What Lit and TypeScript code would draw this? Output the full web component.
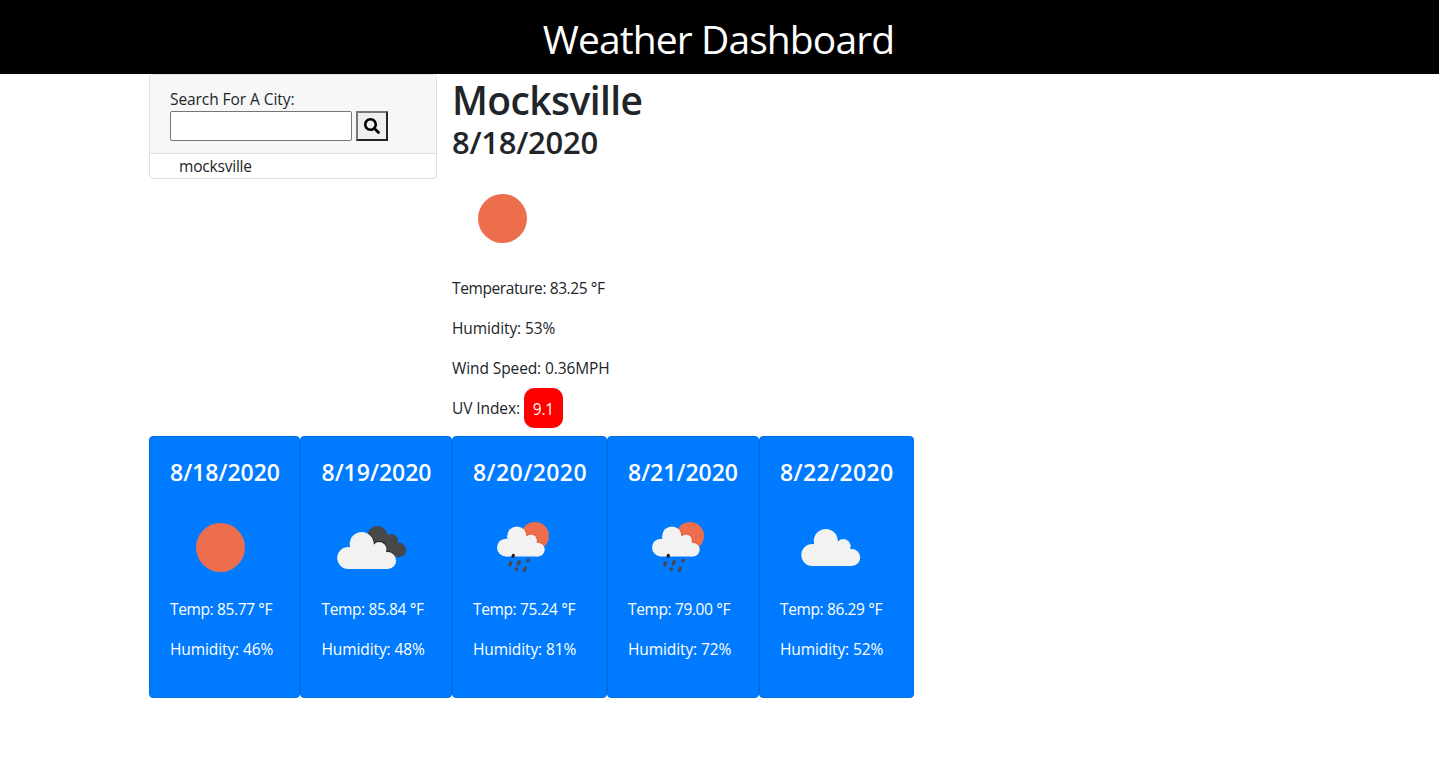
import { LitElement, html, css, svg } from "lit";
import { customElement } from "lit/decorators.js";

interface Day {
  date: string;
  icon: string;
  temp: string;
  humidity: string;
  width: number;
  tracking: number;
}

const cloud = svg`<circle cx="11" cy="26" r="11"/><circle cx="24.5" cy="12" r="12"/><circle cx="42" cy="17.3" r="7.3"/><circle cx="50.4" cy="28.5" r="8.5"/><path d="M11 37V20H13V12H36V17H48L50.4 24V37Z"/>`;

const drawings: Record<string, unknown> = {
  sun: svg`<circle cx="50.5" cy="49.5" r="24.5" fill="#ec6e4c"/>`,
  cloud: svg`<g fill="#f2f2f0" transform="translate(21.3 31)">${cloud}</g>`,
  broken: svg`
    <g transform="translate(.7 0)">
      <g fill="#484749"><circle cx="55.8" cy="38.3" r="10.3"/><circle cx="69.7" cy="42.8" r="6.7"/><circle cx="77.3" cy="52" r="7.2"/><path d="M56 48L66 43L77 59.2L66 56Z"/></g>
      <g fill="#f2f2f0" transform="translate(15.5 34)">
        <clipPath id="edge"><path d="M31-1L61 15V22L56 23L31 10Z"/></clipPath><g clip-path="url(#edge)" stroke="#222" stroke-width="1.8">${cloud}</g>${cloud}
      </g>
    </g>`,
  rain: svg`
    <circle cx="62" cy="38" r="14" fill="#ec6e4c"/>
    <g fill="#f2f2f2" transform="translate(24 28.5) scale(.81)">
      <clipPath id="rim"><path d="M33 2L40-2L62 16V23L57 23L33 12Z"/></clipPath>
      <g clip-path="url(#rim)" stroke="#e8532b" stroke-width="1.8">${cloud}</g>${cloud}
    </g>
    <g stroke="#484749" stroke-width="3.2" stroke-linecap="round">
      <path stroke="#222" d="M40.4 57.4L40 58.3"/><path d="M37.7 64.7L36.7 67M46.3 63.7L45.2 66.2M55.3 62.1L54.9 62.8M43.5 71L43.2 71.6M52.3 70.2L51.4 72.3"/>
    </g>`,
};

const weatherIcon = (name: string) => html`<svg class="picture" viewBox="0 0 100 100" width="100" height="100">${drawings[name]}</svg>`;

@customElement("app-root")
export class AppRoot extends LitElement {
  static styles = css`
    * { box-sizing: border-box; }
    :host { display: block; min-height: 767px; background: #fff; color: #212529; font: 400 15.5px/24px "Open Sans", "Noto Sans", sans-serif; }
    h1, h2, h3, p { margin: 0; white-space: nowrap; }
    .banner { height: 74px; padding: 9px 2px 0 0; background: #000; color: #fff; text-align: center; }
    .banner h1 { font-size: 39px; line-height: 60px; font-weight: 400; letter-spacing: -0.9px; }
    .content { padding-left: 149px; }
    .top { display: flex; gap: 15px; height: 362px; }
    .search { width: 288px; height: 105px; border: 1px solid #dfdfdf; border-radius: 4px; overflow: hidden; }
    .form { height: 79px; padding: 12px 20px; background: #f7f7f7; border-bottom: 1px solid #dfdfdf; }
    .form label { display: block; letter-spacing: -0.07px; }
    .controls { display: flex; gap: 4px; }
    .field { width: 182px; height: 30px; border: 1px solid #767676; border-radius: 2px; background: #fff; padding: 1px 2px; }
    .go { width: 32px; height: 30px; padding: 0; display: grid; place-items: center; background: #efefef; border: 2px solid; border-color: #767676 #212529 #212529 #767676; border-radius: 0; }
    .history { padding-left: 29px; letter-spacing: -0.2px; }
    .city { font-size: 39px; line-height: 46px; font-weight: 550; padding-top: 3px; letter-spacing: -0.6px; }
    .today { font-size: 31px; line-height: 38px; font-weight: 550; letter-spacing: -0.25px; }
    .picture { display: block; }
    .now .picture { margin: 8px 0 7px; }
    .reading { height: 40px; line-height: 24px; letter-spacing: -0.1px; }
    .temperature { letter-spacing: -0.4px; }
    .uv-row { display: flex; align-items: center; gap: 4px; height: 40px; margin-top: -8px; }
    .uv { width: 39px; height: 40px; padding-top: 1px; border-radius: 10px; background: red; color: #fff; text-align: center; line-height: 40px; }
    .forecast { display: flex; }
    .day { height: 262px; padding: 19px 0 0 20px; border: 1px solid #006fe6; border-radius: 4px; background: #007bff; color: #fff; }
    .day h3 { font-size: 23px; line-height: 32px; font-weight: 600; }
    .day .picture { margin: 10px 0 0; }
    .day p { height: 40px; line-height: 22px; letter-spacing: -0.1px; }
    .day .degrees { letter-spacing: -0.37px; }
  `;

  days: Day[] = [
    { date: "8/18/2020", icon: "sun", temp: "85.77", humidity: "46", width: 151.49, tracking: 0 },
    { date: "8/19/2020", icon: "broken", temp: "85.84", humidity: "48", width: 151.51, tracking: 0 },
    { date: "8/20/2020", icon: "rain", temp: "75.24", humidity: "81", width: 155, tracking: 0.45 },
    { date: "8/21/2020", icon: "rain", temp: "79.00", humidity: "72", width: 152, tracking: 0 },
    { date: "8/22/2020", icon: "cloud", temp: "86.29", humidity: "52", width: 155, tracking: 0.4 },
  ];

  render() {
    return html`
      <header class="banner"><h1>Weather Dashboard</h1></header>
      <main class="content">
        <div class="top">
          <aside class="search">
            <div class="form">
              <label for="city">Search For A City:</label>
              <div class="controls">
                <input class="field" id="city" type="text" />
                <button class="go" aria-label="Search">
                  <svg width="16" height="16" viewBox="0 0 512 512"><path d="M505 442.7L405.3 343c-4.5-4.5-10.6-7-17-7H372c27.6-35.3 44-79.7 44-128C416 93.1 322.9 0 208 0S0 93.1 0 208s93.1 208 208 208c48.3 0 92.7-16.4 128-44v16.3c0 6.4 2.5 12.5 7 17l99.7 99.7c9.4 9.4 24.6 9.4 33.9 0l28.3-28.3c9.4-9.4 9.4-24.6.1-34zM208 336c-70.7 0-128-57.2-128-128 0-70.7 57.2-128 128-128 70.7 0 128 57.2 128 128 0 70.7-57.2 128-128 128z"/></svg>
                </button>
              </div>
            </div>
            <p class="history">mocksville</p>
          </aside>
          <section class="now">
            <h1 class="city">Mocksville</h1>
            <h2 class="today">8/18/2020</h2>
            ${weatherIcon("sun")}
            <p class="reading temperature">Temperature: 83.25 °F</p>
            <p class="reading">Humidity: 53%</p>
            <p class="reading">Wind Speed: 0.36MPH</p>
            <p class="reading uv-row"><span>UV Index:</span><span class="uv">9.1</span></p>
          </section>
        </div>
        <section class="forecast">
          ${this.days.map((d) => html`
            <article class="day" style="width:${d.width}px">
              <h3 style="letter-spacing:${d.tracking}px">${d.date}</h3>
              ${weatherIcon(d.icon)}
              <p class="degrees">Temp: ${d.temp} °F</p>
              <p>Humidity: ${d.humidity}%</p>
            </article>`)}
        </section>
      </main>`;
  }
}
